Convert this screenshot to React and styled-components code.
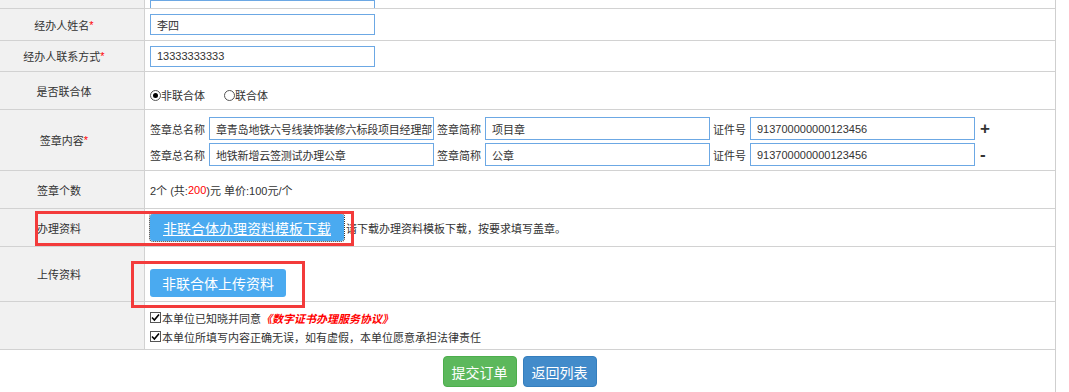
import React from "react";
import styled, { createGlobalStyle } from "styled-components";

const GlobalStyle = createGlobalStyle`
  body {
    margin: 0;
    background: #fff;
    font-family: "Liberation Sans", "Noto Sans CJK SC", sans-serif;
    font-size: 11px;
    color: #333;
    overflow: hidden;
  }
  input, button {
    font-family: inherit;
  }
`;

const Page = styled.div`
  position: relative;
  width: 1056px;
  height: 392px;
  border-right: 1px solid #cfcfcf;
  box-sizing: border-box;
`;

const Row = styled.div`
  display: grid;
  grid-template-columns: 145px 1fr;
  height: ${({ $h }) => $h}px;
  border-bottom: 1px solid #d2d2d2;
  box-sizing: border-box;
  overflow: hidden;
`;

const Label = styled.div`
  display: flex;
  align-items: center;
  justify-content: ${({ $left }) => ($left ? "flex-start" : "center")};
  padding: ${({ $left }) => ($left ? "0 0 0 37px" : "0 16px 0 0")};
  background: #f1f1f1;
  border-right: 1px solid #d2d2d2;
  white-space: nowrap;
`;

const Star = styled.span`
  color: #f00;
`;

const Cell = styled.div`
  display: flex;
  flex-direction: ${({ $column }) => ($column ? "column" : "row")};
  align-items: ${({ $align }) => $align || "center"};
  justify-content: ${({ $justify }) => $justify || "flex-start"};
  gap: ${({ $gap }) => $gap || 0}px;
  padding: ${({ $pad }) => $pad || "0"};
  padding-left: 5px;
  white-space: nowrap;
`;

const Input = styled.input`
  width: 225px;
  height: ${({ $h }) => $h || 21}px;
  border: 1px solid #6ca8e4;
  padding: 0 0 0 6px;
  box-sizing: border-box;
  font-size: 11px;
  letter-spacing: ${({ $tight }) => ($tight ? "-0.2px" : "normal")};
  color: #333;
  outline: none;
  background: #fff;
`;

const RadioGroup = styled.div`
  display: flex;
  align-items: center;
  gap: 19px;
`;

const RadioItem = styled.label`
  display: flex;
  align-items: center;
`;

const RadioDot = styled.span`
  width: 11px;
  height: 11px;
  border-radius: 50%;
  border: 1px solid #555;
  box-sizing: border-box;
  display: flex;
  align-items: center;
  justify-content: center;
  background: #fff;
  &::after {
    content: "";
    width: 5px;
    height: 5px;
    border-radius: 50%;
    background: ${({ $on }) => ($on ? "#000" : "transparent")};
  }
`;

const SealLine = styled.div`
  display: flex;
  align-items: center;
`;

const SealLabel = styled.span`
  margin: 0 4px 0 ${({ $first }) => ($first ? 0 : 3)}px;
`;

const PlusMinus = styled.span`
  margin-left: 5px;
  font-size: 17px;
  font-weight: bold;
  color: #333;
  line-height: 1;
`;

const Red = styled.span`
  color: #f00;
`;

const BlueButton = styled.button`
  height: ${({ $h }) => $h}px;
  padding: 0 ${({ $px }) => $px}px;
  border: none;
  border-radius: 3px;
  background: #4aaaf0;
  color: #fff;
  font-size: 14px;
  text-decoration: ${({ $underline }) => ($underline ? "underline" : "none")};
  outline: ${({ $focus }) => ($focus ? "1px dotted #333" : "none")};
  outline-offset: 0;
  cursor: pointer;
`;

const Hint = styled.span`
  margin-left: 2px;
`;

const CheckLine = styled.div`
  display: flex;
  align-items: center;
  height: 19px;
`;

const CheckBox = styled.span`
  width: 11px;
  height: 11px;
  border: 1px solid #555;
  box-sizing: border-box;
  margin-right: 1px;
  display: flex;
  align-items: center;
  justify-content: center;
  background: #fff;
`;

const Agreement = styled.span`
  color: #f00;
  font-weight: bold;
  font-style: italic;
`;

const ActionBar = styled.div`
  display: flex;
  justify-content: center;
  gap: 6px;
  padding: 6px 16px 0 0;
`;

const ActionButton = styled.button`
  height: 31px;
  padding: 0 8px;
  border: 1px solid ${({ $variant }) => ($variant === "green" ? "#4cae4c" : "#357ebd")};
  border-radius: 4px;
  background: ${({ $variant }) => ($variant === "green" ? "#5cb85c" : "#428bca")};
  color: #fff;
  font-size: 14px;
`;

const Marker = styled.div`
  position: absolute;
  left: ${({ $x }) => $x}px;
  top: ${({ $y }) => $y}px;
  width: ${({ $w }) => $w}px;
  height: ${({ $h }) => $h}px;
  border: 3px solid #f33b3b;
  box-sizing: border-box;
  pointer-events: none;
`;

const Check = () => (
  <svg width="9" height="9" viewBox="0 0 9 9">
    <path d="M1 4.5 L3.4 7 L8 1.5" fill="none" stroke="#000" strokeWidth="1.6" />
  </svg>
);

const seals = [
  { name: "章青岛地铁六号线装饰装修六标段项目经理部", short: "项目章", no: "913700000000123456", sign: "+" },
  { name: "地铁新增云签测试办理公章", short: "公章", no: "913700000000123456", sign: "-" },
];

const App = () => {
  return (
    <Page>
      <GlobalStyle />
      <Row $h={9}>
        <Label />
        <Cell $column $align="flex-start" $justify="flex-end" $pad="0 0 4px 0">
          <Input readOnly defaultValue="" />
        </Cell>
      </Row>

      <Row $h={32}>
        <Label>经办人姓名<Star>*</Star></Label>
        <Cell>
          <Input readOnly defaultValue="李四" />
        </Cell>
      </Row>

      <Row $h={31}>
        <Label>经办人联系方式<Star>*</Star></Label>
        <Cell>
          <Input readOnly defaultValue="13333333333" />
        </Cell>
      </Row>

      <Row $h={38}>
        <Label>是否联合体</Label>
        <Cell $align="flex-end" $pad="0 0 6px 0">
          <RadioGroup>
            <RadioItem><RadioDot $on />非联合体</RadioItem>
            <RadioItem><RadioDot />联合体</RadioItem>
          </RadioGroup>
        </Cell>
      </Row>

      <Row $h={61}>
        <Label>签章内容<Star>*</Star></Label>
        <Cell $column $align="flex-start" $gap={3} $pad="7px 0 0 0">
          {seals.map((s) => (
            <SealLine key={s.name}>
              <SealLabel $first>签章总名称</SealLabel>
              <Input $h={23} $tight readOnly defaultValue={s.name} />
              <SealLabel>签章简称</SealLabel>
              <Input $h={23} readOnly defaultValue={s.short} />
              <SealLabel>证件号</SealLabel>
              <Input $h={23} readOnly defaultValue={s.no} />
              <PlusMinus>{s.sign}</PlusMinus>
            </SealLine>
          ))}
        </Cell>
      </Row>

      <Row $h={38}>
        <Label $left>签章个数</Label>
        <Cell>
          2个 (共:<Red>200</Red>)元 单价:100元/个
        </Cell>
      </Row>

      <Row $h={38}>
        <Label $left>办理资料</Label>
        <Cell>
          <BlueButton $h={27} $px={13} $underline $focus>非联合体办理资料模板下载</BlueButton>
          <Hint>请下载办理资料模板下载，按要求填写盖章。</Hint>
        </Cell>
      </Row>

      <Row $h={55}>
        <Label $left>上传资料</Label>
        <Cell $align="flex-start" $pad="22px 0 0 0">
          <BlueButton $h={28} $px={12}>非联合体上传资料</BlueButton>
        </Cell>
      </Row>

      <Row $h={48}>
        <Label />
        <Cell $column $align="flex-start" $pad="6px 0 0 0">
          <CheckLine>
            <CheckBox><Check /></CheckBox>
            本单位已知晓并同意
            <Agreement>《数字证书办理服务协议》</Agreement>
          </CheckLine>
          <CheckLine>
            <CheckBox><Check /></CheckBox>
            本单位所填写内容正确无误，如有虚假，本单位愿意承担法律责任
          </CheckLine>
        </Cell>
      </Row>

      <ActionBar>
        <ActionButton $variant="green">提交订单</ActionButton>
        <ActionButton $variant="blue">返回列表</ActionButton>
      </ActionBar>

      <Marker $x={35} $y={211} $w={319} $h={35} />
      <Marker $x={131} $y={261} $w={174} $h={47} />
    </Page>
  );
};

export default App;
